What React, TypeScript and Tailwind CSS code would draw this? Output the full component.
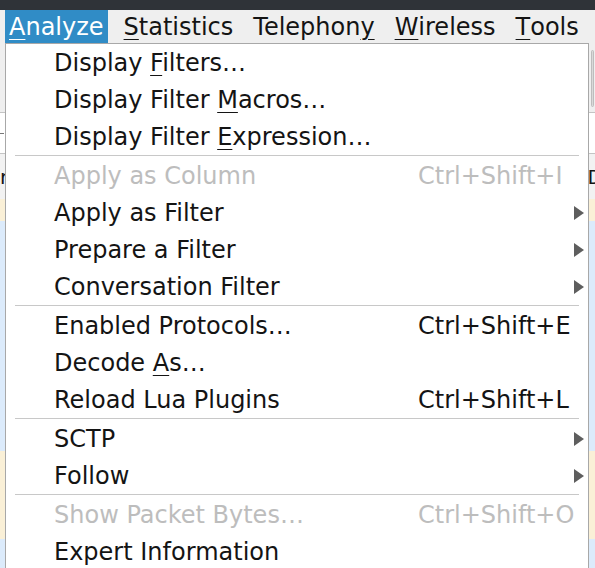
import { ReactNode } from "react";

type Item =
  | { sep: true }
  | { label: ReactNode; shortcut?: string; disabled?: boolean; sub?: boolean; sep?: false };

const U = ({ children }: { children: ReactNode }) => <span className="underline underline-offset-[4px] decoration-1">{children}</span>;

const items: Item[] = [
  { label: <>Display <U>F</U>ilters…</> },
  { label: <>Display Filter <U>M</U>acros…</> },
  { label: <>Display Filter <U>E</U>xpression…</> },
  { sep: true },
  { label: "Apply as Column", shortcut: "Ctrl+Shift+I", disabled: true },
  { label: "Apply as Filter", sub: true },
  { label: "Prepare a Filter", sub: true },
  { label: "Conversation Filter", sub: true },
  { sep: true },
  { label: "Enabled Protocols…", shortcut: "Ctrl+Shift+E" },
  { label: <>Decode <U>A</U>s…</> },
  { label: "Reload Lua Plugins", shortcut: "Ctrl+Shift+L" },
  { sep: true },
  { label: "SCTP", sub: true },
  { label: "Follow", sub: true },
  { sep: true },
  { label: "Show Packet Bytes…", shortcut: "Ctrl+Shift+O", disabled: true },
  { label: "Expert Information" },
];

const menus = [
  { pre: "", u: "A", post: "nalyze", active: true },
  { pre: "", u: "S", post: "tatistics" },
  { pre: "Telephon", u: "y", post: "" },
  { pre: "", u: "W", post: "ireless" },
  { pre: "", u: "T", post: "ools" },
];

const Arrow = () => (
  <svg width="10" height="14" viewBox="0 0 10 14">
    <path d="M0 0 L10 7 L0 14 Z" fill="#5e5e5e" />
  </svg>
);

const App = () => {
  return (
    <div className="relative w-[595px] h-[568px] overflow-hidden bg-[#efefef] text-[24px] leading-none font-['DejaVu_Sans',sans-serif] text-[#141414]">
      <div className="h-[10px] bg-[#2f3338]" />
      {/* menubar */}
      <div className="h-[33px] flex items-stretch pl-[5px] gap-[12px]">
        {menus.map((m, i) => (
          <div
            key={i}
            className={`flex items-center px-[4px] ${m.active ? "bg-[#308cc6] text-white" : ""}`}
          >
            {m.pre}
            <U>{m.u}</U>
            {m.post}
          </div>
        ))}
      </div>

      {/* window content behind the menu */}
      <div className="flex flex-col">
        <div className="h-[70px] border-b border-[#c4c4c4] flex justify-end pt-[7px] pr-[1px]">
          <div className="w-[3px] h-[57px] rounded-sm bg-[#d9d9d9] border border-[#bdbdbd]" />
        </div>
        <div className="h-[41px] bg-white border-b border-[#c4c4c4] flex items-center">
          <div className="w-[4px] h-[1px] bg-[#777]" />
        </div>
        <div className="h-[45px] bg-[#f2f2f2] flex items-center justify-between text-[20px]">
          <span className="-ml-[15px]">Nr</span>
          <span className="-mr-[8px]">D</span>
        </div>
        <div className="h-[22px] bg-[#faf0d7]" />
        <div className="h-[230px] bg-[#dcebfb]" />
        <div className="h-[88px] bg-[#faf0d7]" />
        <div className="h-[40px] bg-[#dcebfb]" />
      </div>

      {/* Analyze popup */}
      <div className="absolute left-[5px] top-[43px] w-[584px] h-[540px] bg-white border border-[#a8a8a8]">
        {items.map((it, i) =>
          it.sep ? (
            <div key={i} className="h-[2px] pl-[9px] pr-[9px]">
              <div className="h-[1px] bg-[#c8c8c8]" />
            </div>
          ) : (
            <div
              key={i}
              className={`h-[37px] grid grid-cols-[364px_1fr_10px] items-center pl-[48px] pr-[4px] ${it.disabled ? "text-[#bdbdbd]" : ""}`}
            >
              <span>{it.label}</span>
              <span>{it.shortcut}</span>
              <span className="flex items-center">{it.sub ? <Arrow /> : null}</span>
            </div>
          )
        )}
      </div>
    </div>
  );
};

export default App;
